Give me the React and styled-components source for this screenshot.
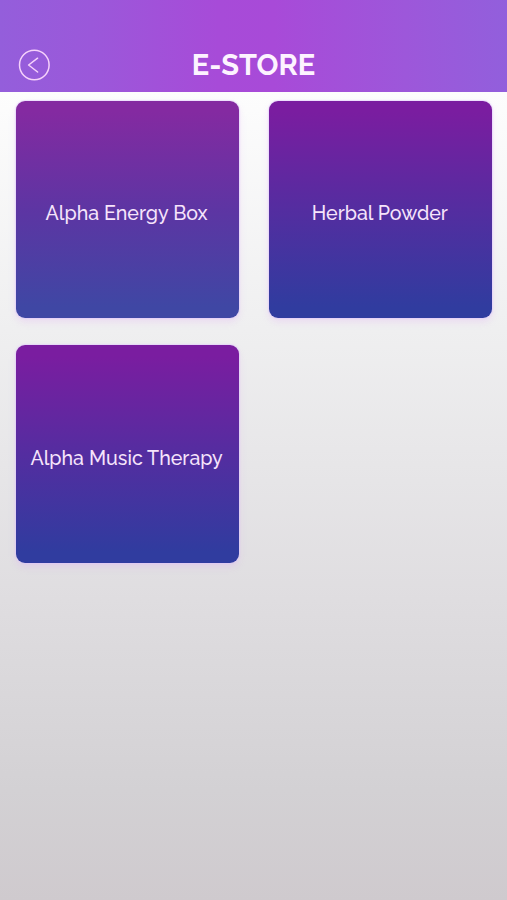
import React from "react";
import styled, { createGlobalStyle } from "styled-components";

const products = [
  { id: 1, name: "Alpha Energy Box", faded: true },
  { id: 2, name: "Herbal Powder" },
  { id: 3, name: "Alpha Music Therapy" },
];

const BackIcon = () => {
  return (
    <svg width="32" height="32" viewBox="0 0 32 32" fill="none">
      <circle cx="16.3" cy="16" r="14.8" stroke="#f6d2fb" strokeWidth="1.5" />
      <path
        d="M19.6 9.2 L10.6 16 L19.6 23"
        stroke="#f6d2fb"
        strokeWidth="1.5"
        strokeLinecap="round"
        strokeLinejoin="round"
      />
    </svg>
  );
};

const ProductCard = ({ name, faded }) => {
  return (
    <Card $faded={faded}>
      <CardName>{name}</CardName>
    </Card>
  );
};

const App = () => {
  return (
    <Page>
      <GlobalStyle />
      <Header>
        <BackButton aria-label="Back">
          <BackIcon />
        </BackButton>
        <Title>E-STORE</Title>
      </Header>
      <ProductGrid>
        {products.map(({ id, name, faded }) => (
          <ProductCard key={id} name={name} faded={faded} />
        ))}
      </ProductGrid>
    </Page>
  );
};

export default App;

const GlobalStyle = createGlobalStyle`
  * {
    box-sizing: border-box;
  }

  body {
    margin: 0;
    font-family: Raleway, Lato, "Liberation Sans", sans-serif;
  }
`;

const Page = styled.div`
  display: flex;
  flex-direction: column;
  height: 100vh;
  overflow: hidden;
  background: linear-gradient(
    #fdfdfd 0,
    #fdfdfd 92px,
    #efeff0 330px,
    #dfdde0 600px,
    #d3d1d4 790px,
    #cfcace 900px
  );
`;

const Header = styled.header`
  display: grid;
  grid-template-columns: 32px 1fr 32px;
  align-items: center;
  flex-shrink: 0;
  height: 92px;
  padding: 38px 18px 0;
  background: linear-gradient(
    90deg,
    #945edb 0%,
    #9b58da 18%,
    #a74bd8 43%,
    #a84ad8 54%,
    #9d57da 80%,
    #925fdc 100%
  );
`;

const BackButton = styled.button`
  display: flex;
  padding: 0;
  border: none;
  background: none;
`;

const Title = styled.h1`
  margin: 0;
  font-size: 29px;
  font-weight: 700;
  line-height: 36px;
  text-align: center;
  color: #fdf3ff;
`;

const ProductGrid = styled.main`
  display: grid;
  grid-template-columns: repeat(2, 1fr);
  grid-auto-rows: 217.4px;
  gap: 27px 30px;
  padding: 8.8px 15px 0 15.5px;
`;

const Card = styled.div`
  display: flex;
  align-items: center;
  justify-content: center;
  padding: 9.4px 1px 0 0;
  border-radius: 9px;
  background: ${({ $faded }) =>
    $faded
      ? "linear-gradient(#842aa1 5%, #5d35a3 50%, #3f47a4 95%)"
      : "linear-gradient(#7a1da0 5%, #542da0 50%, #303c9f 95%)"};
  box-shadow:
    0 0 1px 1px rgba(222, 196, 255, 0.5),
    0 4px 7px rgba(222, 165, 245, 0.28);
`;

const CardName = styled.span`
  font-size: 19.6px;
  font-weight: 500;
  line-height: 26px;
  white-space: nowrap;
  color: #f6e4fb;
`;
